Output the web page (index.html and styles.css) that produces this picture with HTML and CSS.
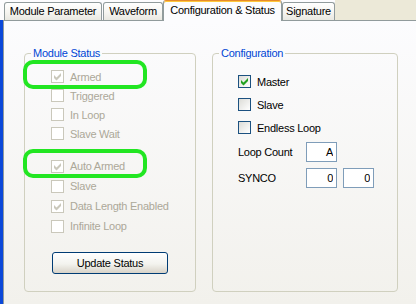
FILE: index.html
```html
<!DOCTYPE html>
<html lang="en">
<head>
    <meta charset="UTF-8">
    <meta name="viewport" content="width=device-width, initial-scale=1.0">
    <title>Configuration &amp; Status</title>
    <link rel="stylesheet" href="styles.css">
</head>
<body>

    <div class="window">
        <div class="tabs">
            <div class="tab tab-module">Module Parameter</div>
            <div class="tab tab-wave">Waveform</div>
            <div class="tab tab-active">Configuration &amp; Status</div>
            <div class="tab tab-sig">Signature</div>
            <div class="tab-fill"></div>
        </div>

        <div class="body-row">
            <div class="edge"></div>
            <div class="panel">

                <fieldset class="group group-status">
                    <legend>Module Status</legend>
                    <div class="list list-top">
                        <div class="row disabled marked">
                            <span class="box"><svg width="11" height="11" viewBox="0 0 11 11"><polygon points="2,4 4.5,6.5 9,2 9,5 4.5,9.5 2,7"/></svg></span>Armed
                        </div>
                        <div class="row disabled"><span class="box"></span>Triggered</div>
                        <div class="row disabled"><span class="box"></span>In Loop</div>
                        <div class="row disabled"><span class="box"></span>Slave Wait</div>
                    </div>
                    <div class="list list-bottom">
                        <div class="row disabled marked">
                            <span class="box"><svg width="11" height="11" viewBox="0 0 11 11"><polygon points="2,4 4.5,6.5 9,2 9,5 4.5,9.5 2,7"/></svg></span>Auto Armed
                        </div>
                        <div class="row disabled"><span class="box"></span>Slave</div>
                        <div class="row disabled">
                            <span class="box"><svg width="11" height="11" viewBox="0 0 11 11"><polygon points="2,4 4.5,6.5 9,2 9,5 4.5,9.5 2,7"/></svg></span>Data Length Enabled
                        </div>
                        <div class="row disabled"><span class="box"></span>Infinite Loop</div>
                    </div>
                    <button class="btn">Update Status</button>
                </fieldset>

                <fieldset class="group group-config">
                    <legend>Configuration</legend>
                    <div class="list list-config">
                        <div class="row row-config">
                            <span class="box"><svg width="11" height="11" viewBox="0 0 11 11"><polygon points="2,4 4.5,6.5 9,2 9,5 4.5,9.5 2,7"/></svg></span>Master
                        </div>
                        <div class="row row-config"><span class="box"></span>Slave</div>
                        <div class="row row-config"><span class="box"></span>Endless Loop</div>

                        <div class="field field-loop">
                            <span class="field-label">Loop Count</span>
                            <input class="num" type="text" value="A">
                        </div>
                        <div class="field field-synco">
                            <span class="field-label">SYNCO</span>
                            <input class="num" type="text" value="0">
                            <input class="num" type="text" value="0">
                        </div>
                    </div>
                </fieldset>

            </div>
        </div>
    </div>

</body>
</html>
```

FILE: styles.css
```css
*, *::before, *::after {
    margin: 0;
    padding: 0;
    box-sizing: border-box;
}

body {
    width: 416px;
    height: 304px;
    overflow: hidden;
    background: #ece9d8;
    font-family: "Liberation Sans", Arial, sans-serif;
    font-size: 11px;
    letter-spacing: -0.25px;
    color: #000;
}

.window {
    display: flex;
    flex-direction: column;
    height: 304px;
}

/* Tab strip */
.tabs {
    display: flex;
    align-items: flex-end;
    height: 20px;
    padding-left: 4px;
    background: #fcfcfe;
}

.tab {
    height: 18px;
    padding-top: 2px;
    line-height: 13px;
    text-align: center;
    border: 1px solid #919b9c;
    border-bottom: none;
    border-radius: 3px 3px 0 0;
    background: linear-gradient(#ffffff, #f6f5f1 55%, #e9e8e1);
}

.tab-module { width: 98px; margin-right: 1px; }
.tab-wave { width: 60px; }
.tab-sig { width: 53px; }

.tab-active {
    width: 119px;
    height: 21px;
    margin-bottom: -1px;
    padding-top: 3px;
    position: relative;
    z-index: 1;
    border-top: 1px solid #e68b2c;
    box-shadow: inset 0 1px 0 #ffc83c;
    background: #fcfcfe;
}

.tab-fill {
    flex: 1;
    align-self: stretch;
    background: #ece9d8;
}

/* Panel */
.body-row {
    flex: 1;
    display: flex;
}

.edge {
    width: 3px;
    background: #0b48d9;
}

.panel {
    flex: 1;
    display: flex;
    align-items: flex-start;
    gap: 16px;
    padding: 26px 0 0 20px;
    border-top: 1px solid #919b9c;
    border-left: 1px solid #919b9c;
    background: linear-gradient(#fcfcfe, #f2f1ec);
}

.group {
    height: 245px;
    border: 1px solid #d0d0bf;
    border-radius: 4px;
    min-width: 0;
}

.group-status { width: 172px; }
.group-config { width: 186px; }

legend {
    margin-left: 6px;
    padding: 0 2px;
    line-height: 13px;
    color: #0046d5;
}

/* Checkbox rows */
.list-top { padding: 7px 0 0 26px; }
.list-bottom { padding: 13px 0 0 26px; }
.list-config { padding: 10px 0 0 25px; }

.row {
    display: flex;
    align-items: center;
    height: 19px;
    position: relative;
}

.list-bottom .row { height: 20px; }
.row-config { height: 23px; }

.box {
    width: 13px;
    height: 13px;
    margin-right: 6px;
    border: 1px solid #1c5180;
    background: linear-gradient(135deg, #dcdcd7, #ffffff);
    display: flex;
}

.box polygon {
    fill: #21a121;
}

.disabled {
    color: #aca899;
}

.disabled .box {
    border-color: #cac8bb;
    background: #ffffff;
}

.disabled .box polygon {
    fill: #cac8bb;
}

/* green annotation ring */
.marked::before {
    content: "";
    position: absolute;
    left: -28px;
    top: -7px;
    width: 124px;
    height: 29px;
    border: 4px solid #22e622;
    border-radius: 10px;
}

/* Button */
.btn {
    display: block;
    width: 116px;
    height: 22px;
    margin: 16px 0 0 27px;
    border: 1px solid #003c74;
    border-radius: 3px;
    background: linear-gradient(#ffffff, #f3f3ee 55%, #d8d3c8);
    font: inherit;
    letter-spacing: inherit;
    color: #000;
}

/* Number fields */
.field {
    display: flex;
    align-items: center;
    gap: 6px;
    height: 20px;
}

.field-loop { margin-top: 3px; }
.field-synco { margin-top: 6px; }

.field-label {
    width: 62px;
}

.num {
    width: 31px;
    height: 20px;
    padding-right: 3px;
    border: 1px solid #7f9db9;
    background: #ffffff;
    text-align: right;
    font: inherit;
    letter-spacing: inherit;
    color: #000;
}
```
